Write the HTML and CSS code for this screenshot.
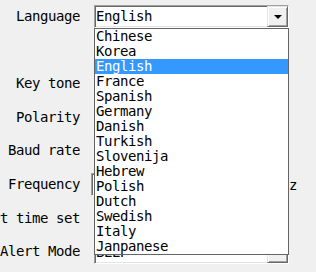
FILE: index.html
```html
<!DOCTYPE html>
<html lang="en">
<head>
    <meta charset="UTF-8">
    <meta name="viewport" content="width=device-width, initial-scale=1.0">
    <title>Device Settings</title>
    <link rel="stylesheet" href="styles.css">
</head>
<body>
    <div class="settings">
        <div class="row row-first">
            <label class="label">Language</label>
            <div class="combo open">
                <span class="combo-value">English</span>
                <span class="combo-btn"><span class="arrow"></span></span>
                <ul class="combo-list">
                    <li>Chinese</li>
                    <li>Korea</li>
                    <li class="selected">English</li>
                    <li>France</li>
                    <li>Spanish</li>
                    <li>Germany</li>
                    <li>Danish</li>
                    <li>Turkish</li>
                    <li>Slovenija</li>
                    <li>Hebrew</li>
                    <li>Polish</li>
                    <li>Dutch</li>
                    <li>Swedish</li>
                    <li>Italy</li>
                    <li>Janpanese</li>
                </ul>
            </div>
        </div>
        <div class="row">
            <label class="label">Key tone</label>
            <div class="combo">
                <span class="combo-value">ON</span>
                <span class="combo-btn"><span class="arrow"></span></span>
            </div>
        </div>
        <div class="row">
            <label class="label">Polarity</label>
            <div class="combo">
                <span class="combo-value">Positive</span>
                <span class="combo-btn"><span class="arrow"></span></span>
            </div>
        </div>
        <div class="row">
            <label class="label">Baud rate</label>
            <div class="combo">
                <span class="combo-value">9600</span>
                <span class="combo-btn"><span class="arrow"></span></span>
            </div>
        </div>
        <div class="row">
            <label class="label">Frequency</label>
            <div class="field">
                <span class="text-input">433.92</span>
                <span class="unit">Hz</span>
            </div>
        </div>
        <div class="row">
            <label class="label">Alert time set</label>
            <div class="combo">
                <span class="combo-value">10s</span>
                <span class="combo-btn"><span class="arrow"></span></span>
            </div>
        </div>
        <div class="row">
            <label class="label">Alert Mode</label>
            <div class="combo">
                <span class="combo-value">BEEP</span>
                <span class="combo-btn"><span class="arrow"></span></span>
            </div>
        </div>
    </div>
</body>
</html>
```

FILE: styles.css
```css
body, html {
    margin: 0;
    padding: 0;
    background-color: #f0f0f0;
    color: black;
    font-family: "DejaVu Sans Mono", "Liberation Mono", monospace;
    font-size: 14px;
    letter-spacing: -0.43px;
    overflow: hidden;
}

.settings {
    display: flex;
    flex-direction: column;
    gap: 10.7px;
    padding-top: 5px;
}

.row {
    display: grid;
    grid-template-columns: 80px 195px;
    column-gap: 14px;
    height: 23px;
}

.row-first {
    margin-bottom: 33.7px;
}

.label {
    display: flex;
    justify-content: flex-end;
    align-items: center;
    white-space: nowrap;
    padding-bottom: 2px;
}

/* combo box, classic look */
.combo {
    position: relative;
    display: flex;
    align-items: center;
    box-sizing: border-box;
    height: 23px;
    background: white;
    border: 1px solid;
    border-color: #a0a0a0 #ffffff #ffffff #a0a0a0;
    box-shadow: inset 1px 1px 0 #696969, inset -1px -1px 0 #e3e3e3;
}

.combo-value {
    flex: 1;
    padding-left: 1px;
    line-height: 19px;
}

.combo-btn {
    display: flex;
    align-items: center;
    justify-content: center;
    box-sizing: border-box;
    width: 21px;
    height: 21px;
    background: #f0f0f0;
    border: 1px solid;
    border-color: #e3e3e3 #696969 #696969 #e3e3e3;
    box-shadow: inset 1px 1px 0 #ffffff, inset -1px -1px 0 #a0a0a0;
}

.arrow {
    width: 0;
    height: 0;
    border-left: 4px solid transparent;
    border-right: 4px solid transparent;
    border-top: 4px solid black;
}

.combo-list {
    position: absolute;
    top: 22px;
    left: -1px;
    width: 195px;
    box-sizing: border-box;
    margin: 0;
    padding: 0;
    list-style: none;
    background: white;
    border: 1px solid #646464;
    z-index: 10;
}

.combo-list li {
    height: 15px;
    line-height: 15px;
    padding-left: 1px;
    white-space: nowrap;
}

.combo-list li.selected {
    background: #3399ff;
    color: white;
}

.field {
    display: flex;
    align-items: center;
    gap: 3px;
    margin-left: -3px;
}

.text-input {
    flex-shrink: 0;
    box-sizing: border-box;
    width: 187px;
    height: 23px;
    line-height: 19px;
    padding-left: 2px;
    background: white;
    border: 1px solid;
    border-color: #a0a0a0 #ffffff #ffffff #a0a0a0;
    box-shadow: inset 1px 1px 0 #696969, inset -1px -1px 0 #e3e3e3;
}

.unit {
    flex-shrink: 0;
    white-space: nowrap;
}
```
